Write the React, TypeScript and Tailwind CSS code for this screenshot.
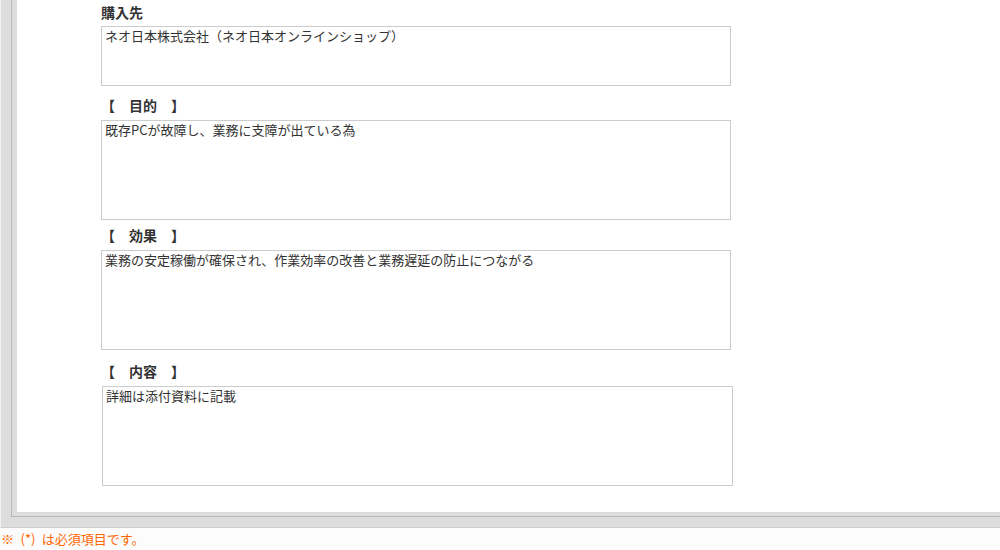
import type { ReactNode } from 'react'

const FONT = '"Noto Sans CJK JP", "Noto Sans", "Liberation Sans", sans-serif'

function Label({ children, className = '' }: { children: ReactNode; className?: string }) {
  return (
    <div className={`h-[18px] text-[14px] font-bold leading-[18px] text-[#333] ${className}`}>{children}</div>
  )
}

function Field({ value, className = '' }: { value: string; className?: string }) {
  return (
    <textarea
      readOnly
      defaultValue={value}
      className={`block resize-none border border-[#cccccc] bg-white px-[3px] pt-px text-[13px] leading-[15px] text-[#333] outline-none ${className}`}
    />
  )
}

export default function App() {
  return (
    <div className="h-[550px] w-[1000px] overflow-hidden bg-[#fcfcfc]" style={{ fontFamily: FONT }}>
      <div className="border-b border-l border-b-[#cfcfcf] border-l-[#f2f2f2] bg-[#dddddd] pb-[10px] pl-[10px]">
        <div className="border-b border-l border-[#b8b8b8] pb-[4px] pl-[5px]">
          <div className="h-[512px] bg-white pl-[84px] pt-[3px]">
            <Label className="mb-[5px]">購入先</Label>
            <Field className="h-[60px] w-[630px]" value="ネオ日本株式会社（ネオ日本オンラインショップ）" />

            <Label className="mb-[6px] mt-[10px]">【　目的　】</Label>
            <Field className="h-[100px] w-[630px]" value="既存PCが故障し、業務に支障が出ている為" />

            <Label className="mb-[6px] mt-[6px]">【　効果　】</Label>
            <Field className="h-[100px] w-[630px]" value="業務の安定稼働が確保され、作業効率の改善と業務遅延の防止につながる" />

            <Label className="mb-[6px] mt-[12px]">【　内容　】</Label>
            <Field className="ml-px h-[100px] w-[631px]" value="詳細は添付資料に記載" />
          </div>
        </div>
      </div>
      <div className="pl-[1px] pt-[2px] text-[13px] leading-[18px] text-[#ff6600]">{'※\u2002(*)\u2002は必須項目です。'}</div>
    </div>
  )
}
